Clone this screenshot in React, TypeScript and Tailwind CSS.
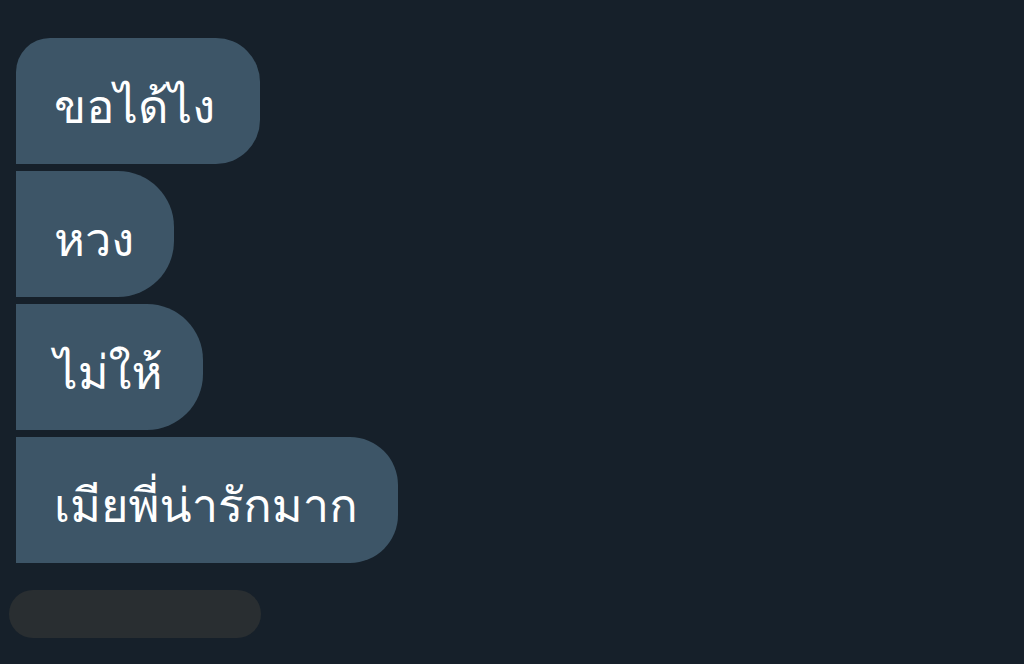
import React from "react";

export default function App() {
  const bubble =
    "h-[126px] flex items-center pt-[10px] pl-[38px] bg-[#3d5567] text-white text-[47px] leading-none";
  return (
    <div className="w-[1024px] h-[664px] bg-[#16202a] overflow-hidden font-['Loma','Noto_Sans_Thai',sans-serif]">
      <div className="flex flex-col items-start gap-[7px] pt-[38px] pl-4">
        <div className={`${bubble} pr-[45px] rounded-tl-[34px] rounded-r-[44px]`}>ขอได้ไง</div>
        <div className={`${bubble} pr-10 rounded-r-[56px]`}>หวง</div>
        <div className={`${bubble} pr-10 rounded-r-[56px]`}>ไม่ให้</div>
        <div className={`${bubble} pr-10 rounded-r-[48px]`}>เมียพี่น่ารักมาก</div>
      </div>
      <div className="ml-[9px] mt-[27px] w-[252px] h-[48px] rounded-full bg-[#292e31]" />
    </div>
  );
}
